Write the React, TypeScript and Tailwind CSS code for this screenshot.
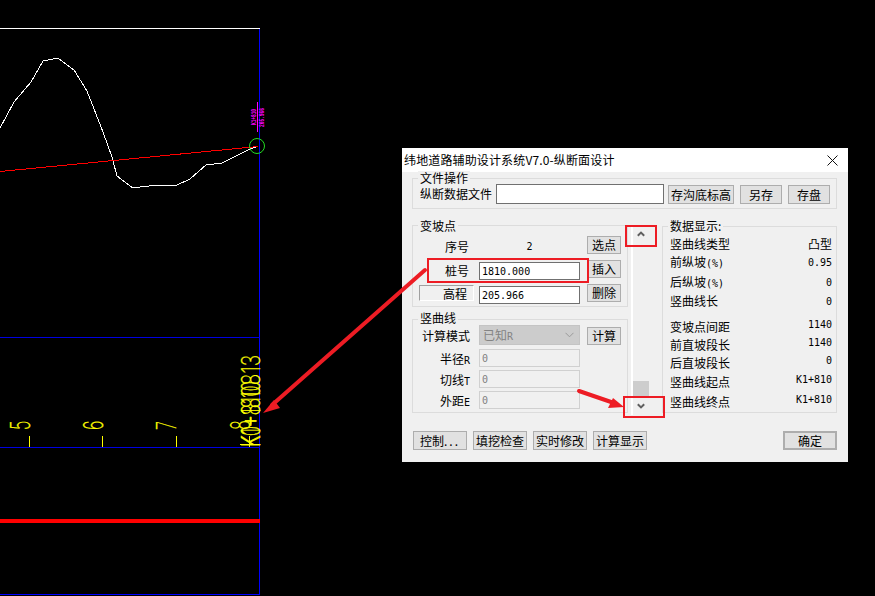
import React from "react";

const cjk = "font-['Noto_Sans_CJK_SC','Noto_Sans',sans-serif]";
const mono = "font-['DejaVu_Sans_Mono','Noto_Sans_CJK_SC',monospace] text-[10px]";

function Btn({ children, className = "" }: { children: React.ReactNode; className?: string }) {
  return (
    <button className={`flex items-center justify-center whitespace-nowrap border border-[#adadad] bg-[#e1e1e1] text-[12px] leading-none text-black ${className}`}>
      {children}
    </button>
  );
}

function Group({ title, className = "", legend = "top-[-8px]", children }: { title: string; className?: string; legend?: string; children: React.ReactNode }) {
  return (
    <div className={`relative border border-[#dcdcdc] ${className}`}>
      <span className={`absolute left-[5px] bg-[#f0f0f0] px-[2px] text-[12px] leading-[14px] text-black ${legend}`}>{title}</span>
      {children}
    </div>
  );
}

function Field({ value, disabled }: { value: string; disabled?: boolean }) {
  return (
    <div className={`flex h-[18px] w-[101px] items-center border px-[2px] ${disabled ? "border-[#d0d0d0] bg-[#f0f0f0] text-[#808080]" : "border-[#707070] bg-white text-black"} ${mono}`}>
      {value}
    </div>
  );
}

const dataRows = [
  { cn: "竖曲线类型", latin: "", value: "凸型", cls: "mt-0", cnValue: true, vCls: "" },
  { cn: "前纵坡", latin: "(%)", value: "0.95", cls: "mt-0", vCls: "" },
  { cn: "后纵坡", latin: "(%)", value: "0", cls: "mt-[2px]", vCls: "" },
  { cn: "竖曲线长", latin: "", value: "0", cls: "mt-[1px]", vCls: "" },
  { cn: "变坡点间距", latin: "", value: "1140", cls: "mt-[8px]", vCls: "mb-[5px]" },
  { cn: "前直坡段长", latin: "", value: "1140", cls: "mt-0", vCls: "mb-[5px]" },
  { cn: "后直坡段长", latin: "", value: "0", cls: "mt-0", vCls: "mb-[5px]" },
  { cn: "竖曲线起点", latin: "", value: "K1+810", cls: "mt-[1px]", vCls: "mb-[5px]" },
  { cn: "竖曲线终点", latin: "", value: "K1+810", cls: "mt-[2px]", vCls: "mb-[5px]" },
];

const curve =
  "0,128 7,115 14,102 31,82 43,61 58,58 74,70 87,91 103,132 112,157 117,176 133,188 140,187 158,185 177,185 190,179 206,165 222,163 248,150 258,146";

function Cad() {
  const yellow = "#ffff00";
  const tick = (x: number) => <line key={x} x1={x} x2={x} y1={436} y2={447} stroke={yellow} />;
  const digit = (d: string, x: number) => (
    <text
      key={d}
      transform={`translate(${x} 430) rotate(-90) scale(0.6 1)`}
      fontFamily="Inter, sans-serif"
      fontWeight={200}
      fontSize={27}
      fill={yellow}
      stroke={yellow}
      strokeWidth={0.3}
    >
      {d}
    </text>
  );
  return (
    <svg className="absolute inset-0" width={875} height={596} viewBox="0 0 875 596">
      <g shapeRendering="crispEdges">
        <line x1={0} x2={260} y1={28.5} y2={28.5} stroke="#ffffff" />
        <line x1={259.5} x2={259.5} y1={29} y2={595} stroke="#0000ff" />
        <line x1={0} x2={260} y1={337.5} y2={337.5} stroke="#0000e0" />
        <line x1={0} x2={260} y1={447.5} y2={447.5} stroke="#0000e0" />
        <line x1={0} x2={260} y1={594.5} y2={594.5} stroke="#0000ff" />
        <rect x={0} y={519} width={260} height={4} fill="#ff0000" />
        <polyline points={curve} fill="none" stroke="#ffffff" />
        <line x1={0} y1={171.5} x2={258} y2={146.5} stroke="#ff0000" />
        <line x1={257.5} x2={257.5} y1={102} y2={132} stroke="#ff00ff" />
        {[29.5, 102.5, 176.5, 249.5].map(tick)}
        <line x1={240} x2={260} y1={444.5} y2={444.5} stroke={yellow} />
      </g>
      <circle cx={257} cy={146} r={7.5} fill="none" stroke="#22dd22" />
      <text transform="translate(256 125) rotate(-90)" fontFamily="'Liberation Mono', monospace" fontSize={8} fontWeight={700} fill="#ff00ff" textLength={16} lengthAdjust="spacingAndGlyphs">K1+810</text>
      <text transform="translate(263.5 127) rotate(-90)" fontFamily="'Liberation Mono', monospace" fontSize={8} fontWeight={700} fill="#ff00ff" textLength={19} lengthAdjust="spacingAndGlyphs">205.966</text>
      {digit("5", 30)}
      {digit("6", 103)}
      {digit("7", 176)}
      {digit("8", 250)}
      <text transform="translate(260 447) rotate(-90)" fontFamily="Inter, sans-serif" fontWeight={200} fontSize={26} fill={yellow} stroke={yellow} strokeWidth={0.3} textLength={92} lengthAdjust="spacingAndGlyphs">K1+810813</text>
      <text transform="translate(260 447) rotate(-90)" fontFamily="Inter, sans-serif" fontWeight={200} fontSize={26} fill={yellow} stroke={yellow} strokeWidth={0.3} textLength={66} lengthAdjust="spacingAndGlyphs">K0+1810</text>
    </svg>
  );
}

function Chevron({ up }: { up?: boolean }) {
  return (
    <svg width={8} height={6} viewBox="0 0 8 6">
      <polyline points={up ? "0.8,4.8 4,1.6 7.2,4.8" : "0.8,1.2 4,4.4 7.2,1.2"} fill="none" stroke="#606060" strokeWidth={2} />
    </svg>
  );
}

export default function App() {
  return (
    <div className={`relative h-[596px] w-[875px] overflow-hidden bg-black ${cjk}`}>
      <Cad />
      {/* dialog window */}
      <div className="absolute left-[402px] top-[148px] flex h-[314px] w-[446px] flex-col bg-[#f0f0f0] text-[12px] text-black">
        <div className="flex h-6 shrink-0 items-center justify-between bg-white pl-[2px] pr-[10px] text-[12px]">
          <span className="whitespace-nowrap tracking-[0.14px]">纬地道路辅助设计系统V7.0-纵断面设计</span>
          <svg width={11} height={11} viewBox="0 0 11 11">
            <path d="M0.5 0.5 L10.5 10.5 M10.5 0.5 L0.5 10.5" stroke="#111" strokeWidth={1} fill="none" />
          </svg>
        </div>
        <div className="flex flex-1 flex-col pl-[10px] pr-[11px]">
          <Group title="文件操作" className="mt-[6px] flex h-[31px] items-start pl-[7px] pt-[5px]">
            <span className="w-[72px] whitespace-nowrap leading-5">纵断数据文件</span>
            <div className="ml-1 h-5 w-[168px] border border-[#707070] bg-white" />
            <Btn className="ml-1 mt-[1px] h-[19px] w-[66px]">存沟底标高</Btn>
            <Btn className="ml-[6px] mt-[1px] h-[19px] w-[42px]">另存</Btn>
            <Btn className="ml-[6px] mt-[1px] h-[19px] w-[42px]">存盘</Btn>
          </Group>
          <div className="mt-[16px] flex">
            <div className="flex w-[216px] flex-col">
              <Group title="变坡点" legend="top-[-7px]" className="flex h-[82px] flex-col gap-1 pt-[10px]">
                <div className="flex h-5 items-start">
                  <span className="w-[66px] pr-[10px] text-right leading-[22px]">序号</span>
                  <span className={`w-[101px] text-center leading-[22px] ${mono}`}>2</span>
                  <Btn className="ml-[7px] h-[18px] w-[34px]">选点</Btn>
                </div>
                <div className="flex h-5 items-start">
                  <span className="w-[66px] pr-[10px] text-right leading-[22px]">桩号</span>
                  <div className="mt-[2px]"><Field value="1810.000" /></div>
                  <Btn className="ml-[7px] h-[18px] w-[34px]">插入</Btn>
                </div>
                <div className="flex h-5 items-start">
                  <div className="ml-[6px] mr-[5px] mt-[1px] flex h-4 w-[55px] items-center justify-end border border-b-white border-l-[#a0a0a0] border-r-white border-t-[#a0a0a0] pr-[6px] pt-[2px]">高程</div>
                  <div className="mt-[2px]"><Field value="205.966" /></div>
                  <Btn className="ml-[7px] h-[18px] w-[34px]">删除</Btn>
                </div>
              </Group>
              <Group title="竖曲线" legend="top-[-9px]" className="mt-[12px] flex h-[94px] flex-col gap-[3px] pt-[5px]">
                <div className="mb-[1px] flex h-5 items-start">
                  <span className="w-[66px] pr-[9px] text-right leading-[22px]">计算模式</span>
                  <div className="flex h-5 w-[101px] items-center justify-between border border-[#c4c4c4] bg-[#cccccc] pl-[3px] pr-[5px] text-[#838383]">
                    <span>已知<span className={mono}>R</span></span>
                    <svg width={9} height={6} viewBox="0 0 9 6"><polyline points="0.5,0.8 4.5,4.8 8.5,0.8" fill="none" stroke="#9a9a9a" /></svg>
                  </div>
                  <Btn className="ml-[7px] mt-[2px] h-[18px] w-[34px]">计算</Btn>
                </div>
                {[["半径", "R"], ["切线", "T"], ["外距", "E"]].map(([c, l]) => (
                  <div key={l} className="flex h-[18px] items-start">
                    <span className="w-[66px] pr-[9px] text-right leading-[20px]">{c}<span className={mono}>{l}</span></span>
                    <Field value="0" disabled />
                  </div>
                ))}
              </Group>
            </div>
            {/* scrollbar */}
            <div className="flex h-[190px] w-[34px] pl-[3px]">
              <div className="h-full w-[2px] bg-white" />
              <div className="flex w-4 flex-col items-center">
                <div className="flex h-[17px] items-center"><Chevron up /></div>
                <div className="flex-1" />
                <div className="h-4 w-4 bg-[#cdcdcd]" />
                <div className="flex h-[18px] items-center"><Chevron /></div>
              </div>
            </div>
            <Group title="数据显示:" legend="top-[-8px]" className="mt-[1px] h-[187px] w-[175px] pl-[7px] pr-[4px] pt-2">
              {dataRows.map((r) => (
                <div key={r.cn} className={`flex h-[18px] items-center justify-between ${r.cls}`}>
                  <span className="whitespace-nowrap">{r.cn}{r.latin && <span className={mono}>{r.latin}</span>}</span>
                  <span className={`${r.cnValue ? "" : mono} ${r.vCls}`}>{r.value}</span>
                </div>
              ))}
            </Group>
          </div>
          <div className="ml-[1px] mt-4 flex h-[19px] gap-[6px]">
            <Btn className="w-[54px]">控制<span className="tracking-[2px]">...</span></Btn>
            <Btn className="w-[54px]">填挖检查</Btn>
            <Btn className="w-[54px]">实时修改</Btn>
            <Btn className="w-[54px]">计算显示</Btn>
            <Btn className="ml-auto w-[54px] border-2 border-[#0078d7]">确定</Btn>
          </div>
        </div>
      </div>
      {/* red annotation boxes and arrows */}
      <div className="absolute left-[427px] top-[258px] h-[25px] w-[162px] border-2 border-[#ed1c24]" />
      <div className="absolute left-[625px] top-[225px] h-[22px] w-[32px] border-2 border-[#ed1c24]" />
      <div className="absolute left-[623px] top-[396px] h-[22px] w-[42px] border-2 border-[#ed1c24]" />
      <svg className="pointer-events-none absolute inset-0" width={875} height={596} viewBox="0 0 875 596">
        <line x1={425} y1={270} x2={272} y2={405} stroke="#ed1c24" strokeWidth={4} strokeLinecap="round" />
        <polygon points="263,413 274,400 280,408" fill="#ed1c24" />
        <line x1={579} y1={391} x2={614} y2={403} stroke="#ed1c24" strokeWidth={4} strokeLinecap="round" />
        <polygon points="624,407 613,398 608,408" fill="#ed1c24" />
      </svg>
    </div>
  );
}
